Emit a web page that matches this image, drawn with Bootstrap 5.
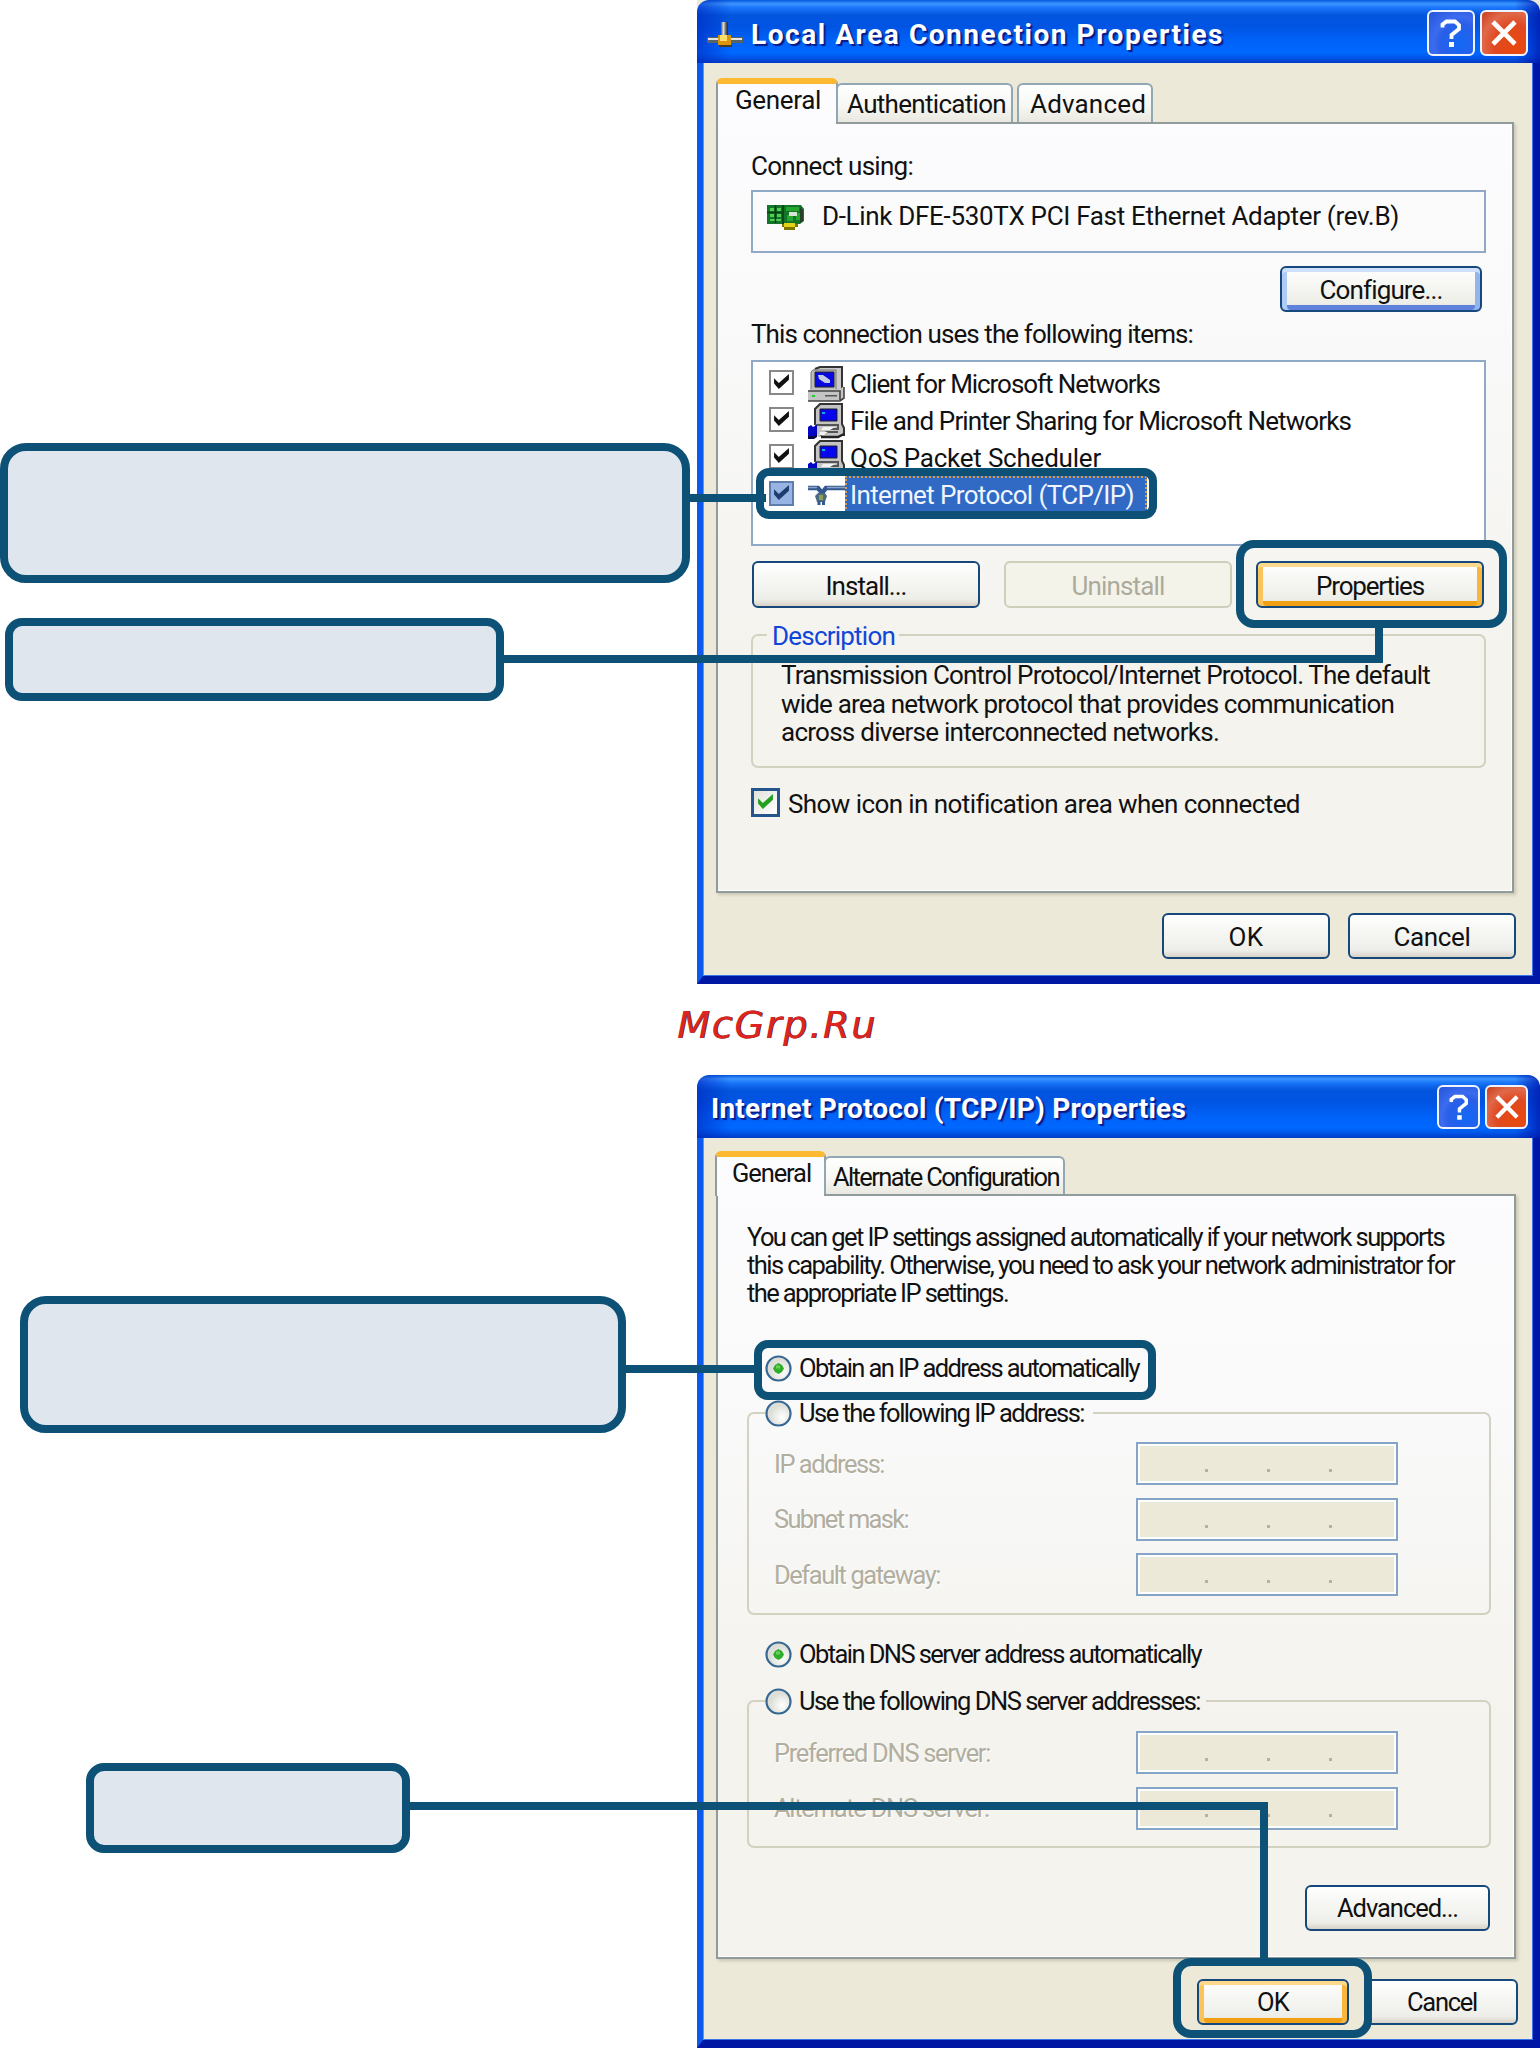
<!DOCTYPE html>
<html lang="en">
<head>
    <meta charset="UTF-8">
    <meta name="viewport" content="width=device-width, initial-scale=1.0">
    <title>Network Connection Setup</title>
    <link href="https://cdn.jsdelivr.net/npm/bootstrap@5.3.3/dist/css/bootstrap.min.css" rel="stylesheet">
    <style>
        body {
            width: 1540px;
            height: 2048px;
            background: #fff;
            color: #111;
            font-family: Roboto, "Liberation Sans", sans-serif;
            font-size: 26px;
            line-height: 28px;
        }
        .page {
            width: 1540px;
            height: 2048px;
        }
        .dialog {
            width: 843px;
        }
        .dialog-one { height: 984px; background: #ece9d8; }
        .dialog-two { height: 973px; font-size: 25.5px; }
        .titlebar {
            height: 63px;
            border-radius: 12px 12px 0 0;
            background: linear-gradient(90deg, rgba(0,40,190,.6) 0, rgba(0,60,220,0) 4%, rgba(0,60,220,0) 97%, rgba(0,20,170,.75) 100%),
                linear-gradient(180deg, #0458dd 0, #3d95ff 6%, #1a77fa 12%, #0355dd 24%, #0054e3 42%, #0062f8 65%, #0068ff 84%, #0058ea 91%, #003bc5 100%);
        }
        .dialog-one .titlebar { padding-top: 2px; }
        .titlebar .caption {
            color: #fff;
            font-family: Roboto, "Noto Sans", sans-serif;
            font-size: 28px;
            font-weight: 700;
            line-height: 36px;
            text-shadow: 2px 2px 1px #0a1a86;
        }
        .tbtn {
            height: 46px;
            width: 48px;
            border: 2px solid #f0f4ff;
            border-radius: 6px;
            background: radial-gradient(circle at 70% 75%, #1268f5 0, #2a5fe8 45%, #3b6bee 60%, #2355d8 100%);
        }
        .tbtn-x {
            background: radial-gradient(circle at 75% 80%, #e8480c 0, #df4a22 45%, #e0694a 70%, #c63d1c 100%);
        }
        .dialog-two .tbtn { width: 43px; height: 44px; }
        .dialog-body {
            background: #ece9d8;
            border-style: solid;
            border-width: 0 7px 8px 6px;
            border-color: #001fb5 #0016a6 #0017a3 #0b5aec;
            box-shadow: inset 1px 0 #6d92dd, inset -1px -1px #3d74e8;
        }
        .tabs { position: relative; z-index: 1; }
        .xtab {
            border: 2px solid #91a7b4;
            border-bottom: 0;
            border-radius: 6px 6px 0 0;
            background: linear-gradient(#fff, #f6f6f2 60%, #e9e8e0);
            white-space: nowrap;
        }
        .xtab-on {
            background: #fcfcfe;
            border-color: #919b9c;
            border-top: 6px solid #fdb932;
        }
        .pane {
            border: 2px solid #919b9c;
            background: linear-gradient(#fcfcfe 0, #f9f9f9 30%, #f4f3ee 68%, #f4f3ee 100%);
            box-shadow: 2px 2px 3px #c9c6b4, inset -1px -1px #fff;
        }
        .t { display: inline-block; white-space: nowrap; }
        .dialog-one .t, .dialog-two .tabs .t { transform: translateY(1px); }
        .framebox { border: 2px solid #8fa9c6; }
        .xbtn {
            height: 46px;
            border: 2.5px solid #16487c;
            border-radius: 6px;
            background: linear-gradient(#fff 0, #f6f6f3 40%, #eeeee9 84%, #d8d2c8 100%);
            color: #111;
        }
        .xbtn-focus { box-shadow: inset 0 4px #cfe0fd, inset 5px 0 #aecbf7, inset -5px 0 #94b4ee, inset 0 -5px #5f83dc; }
        .xbtn-hot { box-shadow: inset 0 4px #ffd98b, inset 5px 0 #fbc45a, inset -5px 0 #f9b63c, inset 0 -5px #f0a012; }
        .xbtn-off { background: #f4f3ea; border-color: #cfcebb; color: #acab9b; }
        fieldset.grp {
            border: 2px solid #d3d2c1;
            border-radius: 7px;
        }
        fieldset.grp legend {
            float: none;
            width: auto;
            margin: 0;
            font-size: inherit;
            line-height: 28px;
        }
        .blue-text { color: #0f46d9; }
        .cbox { width: 25px; height: 25px; border: 2px solid #888; background: #fff; }
        .cbox-lg { width: 29px; height: 29px; border: 3px solid #24568d; background: linear-gradient(135deg, #e2e2dc, #fff); }
        .list-row { height: 37px; line-height: 37px; }
        .list-row .cbox { margin: 0 0 2px 16px; }
        .list-row svg.ico { margin-left: 14px; }
        .picked {
            height: 37px;
            width: 302px;
            padding-left: 5px;
            background: #316ac5;
            outline: 2px dotted #d69a45;
            outline-offset: -2px;
            color: #f0f5ff;
        }
        .muted { color: #b1ae9f; text-shadow: 1px 1px #fff; }
        .radio { width: 27px; height: 27px; flex: none; }
        .ipbox {
            width: 262px;
            height: 43px;
            border: 2px solid #86a4c5;
            background: #ece9d8;
            box-shadow: inset 0 0 0 2px #fff;
            padding: 0 64px 0 67px;
        }
        .ipbox i { width: 3px; height: 3px; background: #b5b2a2; margin-top: 25px; }
        .ip-row { height: 43px; margin-bottom: 12.5px; padding-left: 25px; padding-right: 91px; }
        .watermark {
            height: 91px;
            color: #dc2420;
            font: italic 38px/50px "DejaVu Sans", sans-serif;
            text-shadow: 1px 0 #5b2020;
            padding: 16px 0 0 677px;
        }
        .notes { top: 0; left: 0; pointer-events: none; z-index: 5; }
        .dialog-one .pane { height: 771px; width: 798px; margin-left: 13px; padding: 27px 26px 0 33px; }
        .dialog-two .pane { height: 765px; width: 800px; margin-left: 13px; padding: 27px 23px 0 29px; }
    </style>
</head>
<body>

<!-- shared icons -->
<svg width="0" height="0" class="position-absolute">
    <defs>
        <radialGradient id="rg" cx="65%" cy="65%"><stop offset="0" stop-color="#fff"/><stop offset="1" stop-color="#deded8"/></radialGradient>
        <symbol id="radio" viewBox="0 0 27 27">
            <circle cx="13.5" cy="13.5" r="12" fill="url(#rg)" stroke="#356793" stroke-width="2.2"/>
        </symbol>
        <symbol id="radio-on" viewBox="0 0 27 27">
            <circle cx="13.5" cy="13.5" r="12" fill="url(#rg)" stroke="#356793" stroke-width="2.2"/>
            <path d="M13.5 8l3.500 2 2 3.500-2 3.500-3.500 2-3.500-2-2-3.500 2-3.500z" fill="#2fae2c"/>
            <path d="M11 10.500h4v3h-4z" fill="#68d060"/>
        </symbol>
        <symbol id="tick" viewBox="0 0 16 16">
            <path d="M1 4v5l4.500 5L15 5.500V0L5.500 8.500z" fill="currentColor"/>
        </symbol>
        <symbol id="pc" viewBox="0 0 37 36">
            <path d="M7 2l5-2h23v23h-4L3 24V5z" fill="#c9c9c9"/>
            <path d="M7 3l5-2h22v22" fill="none" stroke="#333" stroke-width="2"/>
            <path d="M3 6l2-2h23v20H3z" fill="#bdbdbd" stroke="#777"/>
            <path d="M7 6h19v15H7z" fill="#0808e0" stroke="#222"/>
            <path d="M10 9h5l7 5v3h-5l-6-4z" fill="#c4cbe0"/>
            <path d="M0 25l3-2h29l4-3v12l-4 3H0z" fill="#c4c4c4"/>
            <path d="M0 35h32l4-3V21M0 25h32v9" fill="none" stroke="#444" stroke-width="1.600"/>
            <path d="M4 29h3v2H4z" fill="#20d030"/><path d="M17 29h12v1.500H17z" fill="#555"/>
        </symbol>
        <symbol id="pcnet" viewBox="0 0 37 36">
            <path d="M7 6l5-5h21v20l3 3v8l-5 2H10l-3-9z" fill="#c4c4c4"/>
            <path d="M7 22V6l5-5h22v20l2 4v8" fill="none" stroke="#333" stroke-width="2"/>
            <path d="M12 6h17v12H12z" fill="#0505ee" stroke="#222"/>
            <path d="M14 9h3v2h-3z" fill="#19a8e8"/>
            <path d="M7 22h24M15 26h15v-3M12 32l7-3h11" fill="none" stroke="#555" stroke-width="2"/>
            <path d="M15 24h12l-5 3h-9zM12 29h8l-4 3h-5z" fill="#f3f3f3"/>
            <path d="M13 34h17l6-3" fill="none" stroke="#222" stroke-width="2.500"/>
            <path d="M0 24l3-2 2 2 4-2v11l-3 2H0z" fill="#0505c4"/><path d="M0 33h6l3-2v3l-3 2H0z" fill="#080840"/>
        </symbol>
        <symbol id="tcp" viewBox="0 0 37 26">
            <path d="M0 6h10l4 5 4-5h19" fill="none" stroke="#34588e" stroke-width="4.500"/>
            <path d="M0 5.500h9M19 5.500h18" stroke="#8ba3cb" stroke-width="1.500"/>
            <path d="M7 14l3-3h7l2 3-2 6H9z" fill="#4e6a83"/><path d="M11 13h4v5h-4z" fill="#8ca24e"/>
            <path d="M11 19v4M15.500 19v4" stroke="#34588e" stroke-width="3"/>
        </symbol>
        <symbol id="cross" viewBox="0 0 26 26">
            <path d="M2 2l22 22M24 2L2 24" stroke="#fff" stroke-width="4.600"/>
        </symbol>
        <symbol id="help" viewBox="0 0 22 28">
            <path d="M2.500 8.500V5.500l4-3h8.500l4 3.500v4l-7.500 6v4" fill="none" stroke="#fff" stroke-width="3.800"/>
            <path d="M9 23h5v5H9z" fill="#fff"/>
        </symbol>
    </defs>
</svg>

<div class="page position-relative overflow-hidden">

    <!-- Local Area Connection Properties -->
    <div class="dialog dialog-one ms-auto d-flex flex-column">
        <div class="titlebar d-flex align-items-center flex-shrink-0">
            <svg width="36" height="28" viewBox="0 0 36 28" style="margin:4px 0 0 10px">
                <path d="M14 1h7v14h-7z" fill="#777"/><path d="M15.500 1h2v14h-2z" fill="#ddd"/><path d="M19.500 1h1.500v14h-1.500z" fill="#333"/>
                <path d="M0 16h36v6H0z" fill="#59646a"/><path d="M1 17h34v2H1z" fill="#e4e4e4"/>
                <path d="M11 14h13v10H11z" fill="#d9960e"/><path d="M13 14h7v6h-7z" fill="#ffdf6a"/><path d="M12 24h13v2H12z" fill="#473a26"/>
            </svg>
            <span class="caption t ms-2" data-w="473" style="padding-top:3px">Local Area Connection Properties</span>
            <div class="d-flex ms-auto me-2 pe-1" style="gap:5px">
                <div class="tbtn d-flex align-items-center justify-content-center"><svg width="22" height="28"><use href="#help"/></svg></div>
                <div class="tbtn tbtn-x d-flex align-items-center justify-content-center"><svg width="26" height="26"><use href="#cross"/></svg></div>
            </div>
        </div>
        <div class="dialog-body flex-grow-1 d-flex flex-column">
            <div class="tabs d-flex align-items-end" style="margin:15px 0 0 13px;height:46px">
                <div class="xtab xtab-on" style="width:122px;height:46px;padding:1px 0 0 17px"><span class="t" data-w="86">General</span></div>
                <div class="xtab" style="width:177px;height:39px;margin:0 4px 2px -2px;padding:4px 0 0 9px"><span class="t" data-w="159">Authentication</span></div>
                <div class="xtab" style="width:136px;height:39px;margin-bottom:2px;padding:4px 0 0 11px"><span class="t" data-w="116">Advanced</span></div>
            </div>
            <div class="pane" style="margin-top:-2px">
                <div><span class="t" data-w="162">Connect using:</span></div>
                <div class="framebox d-flex" style="height:63px;margin-top:11px;padding:9px 0 0 14px">
                    <svg width="37" height="26" viewBox="0 0 37 26" style="margin-top:3px">
                        <path d="M0 1h34l3 4v12l-4 3H0z" fill="#12752a"/>
                        <path d="M3 4h4v3H3zM10 4h4v3h-4zM3 10h4v3H3zM10 10h4v3h-4zM3 15h11v2H3z" fill="#51cf51"/>
                        <path d="M0 8.500h15M8.500 1v18M16 1v19" stroke="#0b3d14" stroke-width="1.500"/>
                        <path d="M19 3h13v4H19zM20 11h6v6h-6zM29 9h4v7h-4z" fill="#25a62f"/>
                        <path d="M22 8h8v4h-8z" fill="#d5e4d5"/><path d="M33 3l3 3v11l-3 2z" fill="#28412a"/>
                        <path d="M15 20h16v3h-3v3H17v-3h-2z" fill="#7d7600"/><path d="M17 19h11v4H17z" fill="#e3d21a"/>
                    </svg>
                    <span class="t" data-w="577" style="margin-left:18px">D-Link DFE-530TX PCI Fast Ethernet Adapter (rev.B)</span>
                </div>
                <div class="d-flex justify-content-end" style="margin-top:13px;padding-right:4px">
                    <div class="xbtn xbtn-focus d-flex align-items-center justify-content-center" style="width:202px"><span class="t" data-w="122">Configure...</span></div>
                </div>
                <div style="margin-top:7px"><span class="t" data-w="442">This connection uses the following items:</span></div>
                <div class="framebox bg-white" style="height:186px;margin-top:13px;padding-top:3px">
                    <div class="list-row d-flex align-items-center">
                        <div class="cbox d-flex align-items-center justify-content-center"><svg width="17" height="17"><use href="#tick"/></svg></div>
                        <svg class="ico" width="37" height="36"><use href="#pc"/></svg>
                        <span class="t" data-w="310" style="margin-left:5px">Client for Microsoft Networks</span>
                    </div>
                    <div class="list-row d-flex align-items-center">
                        <div class="cbox d-flex align-items-center justify-content-center"><svg width="17" height="17"><use href="#tick"/></svg></div>
                        <svg class="ico" width="37" height="36"><use href="#pcnet"/></svg>
                        <span class="t" data-w="501" style="margin-left:5px">File and Printer Sharing for Microsoft Networks</span>
                    </div>
                    <div class="list-row d-flex align-items-center">
                        <div class="cbox d-flex align-items-center justify-content-center"><svg width="17" height="17"><use href="#tick"/></svg></div>
                        <svg class="ico" width="37" height="36"><use href="#pcnet"/></svg>
                        <span class="t" data-w="251" style="margin-left:5px">QoS Packet Scheduler</span>
                    </div>
                    <div class="list-row d-flex align-items-center">
                        <div class="cbox d-flex align-items-center justify-content-center" style="background:#98b4e2;border-color:#5e7fae;color:#1d3c70"><svg width="17" height="17"><use href="#tick"/></svg></div>
                        <svg class="ico" width="37" height="26"><use href="#tcp"/></svg>
                        <div class="picked"><span class="t" data-w="284">Internet Protocol (TCP/IP)</span></div>
                    </div>
                </div>
                <div class="d-flex justify-content-between" style="margin:15px 2px 0 1px">
                    <div class="xbtn d-flex align-items-center justify-content-center" style="width:228px;height:47px"><span class="t" data-w="81">Install...</span></div>
                    <div class="xbtn xbtn-off d-flex align-items-center justify-content-center" style="width:228px;height:47px"><span class="t" data-w="93">Uninstall</span></div>
                    <div class="xbtn xbtn-hot d-flex align-items-center justify-content-center" style="width:228px;height:47px"><span class="t" data-w="108">Properties</span></div>
                </div>
                <fieldset class="grp" style="height:147px;margin-top:13px;padding-left:28px">
                    <legend class="blue-text" style="margin-left:-14px;padding:0 4px 0 5px"><span class="t" data-w="123">Description</span></legend>
                    <div style="padding-top:11px;line-height:28.500px">
                        <span class="t" data-w="649">Transmission Control Protocol/Internet Protocol. The default</span><br>
                        <span class="t" data-w="613">wide area network protocol that provides communication</span><br>
                        <span class="t" data-w="438">across diverse interconnected networks.</span>
                    </div>
                </fieldset>
                <div class="d-flex" style="margin-top:20px">
                    <div class="cbox-lg d-flex align-items-center justify-content-center"><svg width="17" height="17" color="#22a020"><use href="#tick"/></svg></div>
                    <span class="t" data-w="511" style="margin:1px 0 0 8px">Show icon in notification area when connected</span>
                </div>
            </div>
            <div class="d-flex justify-content-end" style="gap:18px;margin:20px 17px 0 0">
                <div class="xbtn d-flex align-items-center justify-content-center" style="width:168px"><span class="t" data-w="35">OK</span></div>
                <div class="xbtn d-flex align-items-center justify-content-center" style="width:168px"><span class="t" data-w="77">Cancel</span></div>
            </div>
        </div>
    </div>

    <div class="watermark"><span class="t" data-w="200">McGrp.Ru</span></div>

    <!-- Internet Protocol (TCP/IP) Properties -->
    <div class="dialog dialog-two ms-auto d-flex flex-column">
        <div class="titlebar d-flex align-items-center flex-shrink-0">
            <span class="caption t" data-w="475" style="margin-left:14px;padding-top:4px">Internet Protocol (TCP/IP) Properties</span>
            <div class="d-flex ms-auto" style="gap:5px;margin-right:12px">
                <div class="tbtn d-flex align-items-center justify-content-center"><svg width="20" height="28"><use href="#help"/></svg></div>
                <div class="tbtn tbtn-x d-flex align-items-center justify-content-center"><svg width="24" height="24"><use href="#cross"/></svg></div>
            </div>
        </div>
        <div class="dialog-body flex-grow-1 d-flex flex-column">
            <div class="tabs d-flex align-items-end" style="margin:13px 0 0 12px;height:45px">
                <div class="xtab xtab-on" style="width:111px;height:45px;padding:1px 0 0 15px"><span class="t" data-w="79">General</span></div>
                <div class="xtab" style="width:241px;height:38px;margin:0 0 2px -2px;padding:4px 0 0 7px"><span class="t" data-w="225">Alternate Configuration</span></div>
            </div>
            <div class="pane" style="margin-top:-2px">
                <div>
                    <span class="t" data-w="697">You can get IP settings assigned automatically if your network supports</span><br>
                    <span class="t" data-w="707">this capability. Otherwise, you need to ask your network administrator for</span><br>
                    <span class="t" data-w="261">the appropriate IP settings.</span>
                </div>
                <div class="d-flex align-items-center" style="margin:47px 0 0 18px;height:28px">
                    <svg class="radio"><use href="#radio-on"/></svg>
                    <span class="t" data-w="340" style="margin-left:7px">Obtain an IP address automatically</span>
                </div>
                <fieldset class="grp" style="height:216px;margin-top:17px">
                    <legend class="d-flex align-items-center" style="margin-left:16px;padding-right:9px">
                        <svg class="radio"><use href="#radio"/></svg>
                        <span class="t" data-w="285" style="margin-left:7px">Use the following IP address:</span>
                    </legend>
                    <div class="ip-row d-flex justify-content-between align-items-center" style="margin-top:15px">
                        <span class="t muted" data-w="110">IP address:</span>
                        <div class="ipbox d-flex justify-content-between"><i></i><i></i><i></i></div>
                    </div>
                    <div class="ip-row d-flex justify-content-between align-items-center">
                        <span class="t muted" data-w="134">Subnet mask:</span>
                        <div class="ipbox d-flex justify-content-between"><i></i><i></i><i></i></div>
                    </div>
                    <div class="ip-row d-flex justify-content-between align-items-center">
                        <span class="t muted" data-w="166">Default gateway:</span>
                        <div class="ipbox d-flex justify-content-between"><i></i><i></i><i></i></div>
                    </div>
                </fieldset>
                <div class="d-flex align-items-center" style="margin:25px 0 0 18px;height:28px">
                    <svg class="radio"><use href="#radio-on"/></svg>
                    <span class="t" data-w="402" style="margin-left:7px">Obtain DNS server address automatically</span>
                </div>
                <fieldset class="grp" style="height:161px;margin-top:19px">
                    <legend class="d-flex align-items-center" style="margin-left:16px;padding-right:6px">
                        <svg class="radio"><use href="#radio"/></svg>
                        <span class="t" data-w="401" style="margin-left:7px">Use the following DNS server addresses:</span>
                    </legend>
                    <div class="ip-row d-flex justify-content-between align-items-center" style="margin-top:16px">
                        <span class="t muted" data-w="216">Preferred DNS server:</span>
                        <div class="ipbox d-flex justify-content-between"><i></i><i></i><i></i></div>
                    </div>
                    <div class="ip-row d-flex justify-content-between align-items-center">
                        <span class="t muted" data-w="215">Alternate DNS server:</span>
                        <div class="ipbox d-flex justify-content-between"><i></i><i></i><i></i></div>
                    </div>
                </fieldset>
                <div class="d-flex justify-content-end" style="margin-top:37px;padding-right:1px">
                    <div class="xbtn d-flex align-items-center justify-content-center" style="width:185px"><span class="t" data-w="121">Advanced...</span></div>
                </div>
            </div>
            <div class="d-flex justify-content-end" style="gap:17px;margin:20px 15px 0 0">
                <div class="xbtn xbtn-hot d-flex align-items-center justify-content-center" style="width:152px"><span class="t" data-w="32">OK</span></div>
                <div class="xbtn d-flex align-items-center justify-content-center" style="width:152px"><span class="t" data-w="70">Cancel</span></div>
            </div>
        </div>
    </div>

    <!-- callouts and leader lines drawn over the dialogs -->
    <svg class="notes position-absolute" width="1540" height="2048" fill="none" stroke="#0d5176" stroke-width="8">
        <g fill="#dfe6ee">
            <rect x="4" y="447" width="682" height="132" rx="22"/>
            <rect x="9" y="622" width="491" height="75" rx="13"/>
            <rect x="24" y="1300" width="598" height="129" rx="22"/>
            <rect x="90" y="1767" width="316" height="82" rx="14"/>
        </g>
        <path d="M690 498h76M504 659h875v-31M626 1369h130M410 1806h854v152"/>
        <rect x="760" y="472" width="393" height="43" rx="9"/>
        <rect x="1240" y="544" width="263" height="80" rx="14"/>
        <rect x="758" y="1344" width="394" height="52" rx="10"/>
        <rect x="1177" y="1962" width="191" height="72" rx="14"/>
    </svg>
</div>

<script>
    // spread or tighten each label to its target width
    document.querySelectorAll("[data-w]").forEach((el) => {
        const gap = (el.dataset.w - el.getBoundingClientRect().width) / el.textContent.length;
        el.style.letterSpacing = gap.toFixed(3) + "px";
    });
</script>
<script src="https://cdn.jsdelivr.net/npm/bootstrap@5.3.3/dist/js/bootstrap.bundle.min.js"></script>
</body>
</html>
